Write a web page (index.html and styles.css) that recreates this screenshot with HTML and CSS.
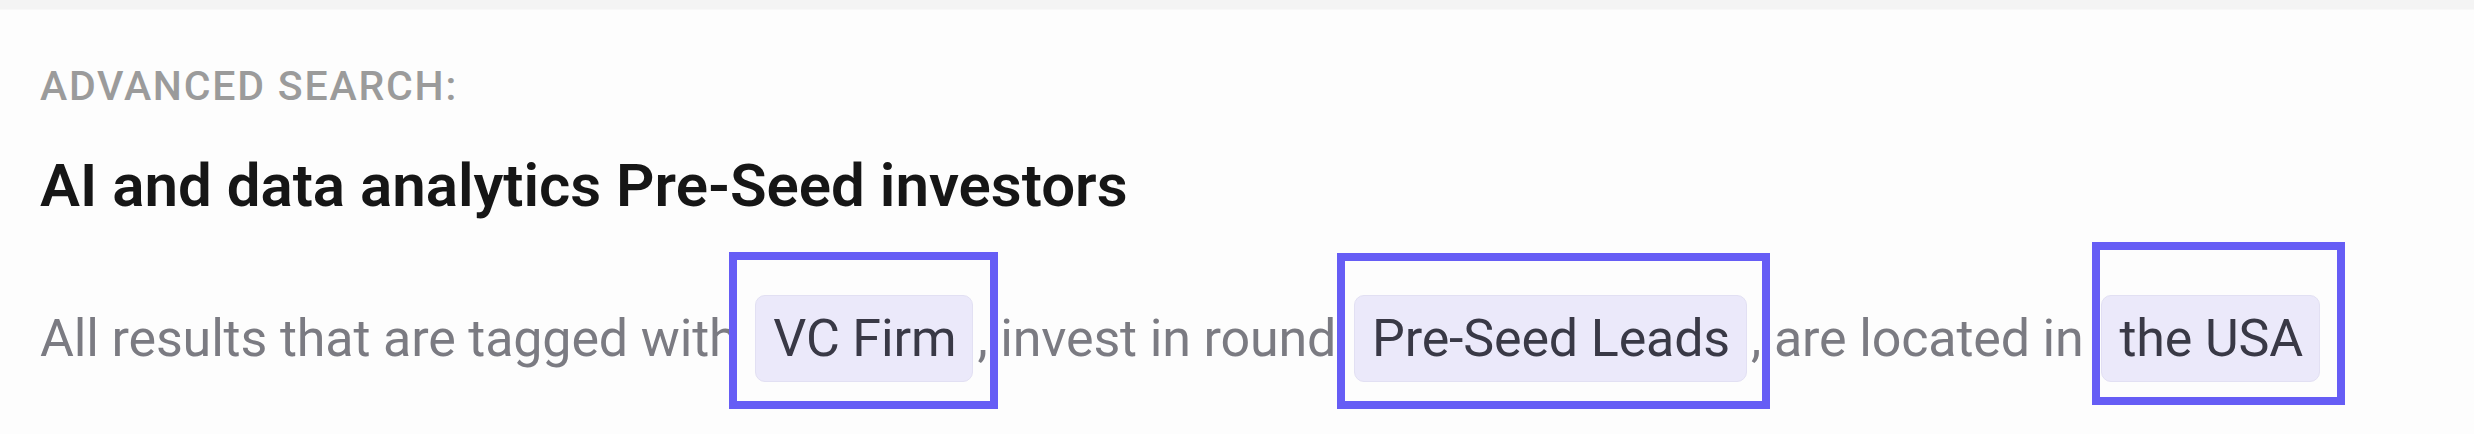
FILE: index.html
```html
<!DOCTYPE html>
<html lang="en">
<head>
  <meta charset="UTF-8" />
  <meta name="viewport" content="width=device-width, initial-scale=1.0"/>
  <title>Advanced Search</title>
  <link rel="stylesheet" href="styles.css">
</head>
<body>
  <div class="topbar"></div>
  <div class="search-summary">
    <p class="eyebrow">ADVANCED SEARCH:</p>
    <h1 class="query-title">AI and data analytics Pre-Seed investors</h1>
    <p class="criteria">
      All results that are tagged with <span class="tag tag-firm">VC Firm</span>, invest in round <span class="tag tag-round">Pre-Seed Leads</span>, are located in <span class="tag tag-place">the USA</span>
    </p>
  </div>
</body>
</html>
```

FILE: styles.css
```css
* { box-sizing: border-box; }
html, body { min-height: 100%; }
body {
  margin: 0;
  font-family: Roboto, 'Noto Sans', sans-serif;
  background: #fdfdfd;
  color: #161616;
}
.topbar {
  height: 10px;
  background: #f4f4f4;
  border-bottom: 1px solid #f8f8f8;
}
.search-summary {
  padding: 52px 40px 40px;
}
.eyebrow {
  margin: 0;
  font-size: 41px;
  line-height: 48px;
  font-weight: 500;
  letter-spacing: 1.8px;
  color: #9b9b9b;
}
.query-title {
  margin: 41px 0 0;
  font-size: 60px;
  line-height: 70px;
  font-weight: 600;
  color: #161616;
}
.criteria {
  margin: 74px 0 0;
  font-size: 52px;
  line-height: 87px;
  letter-spacing: -0.15px;
  color: #7b7b82;
  white-space: nowrap;
}
.tag {
  position: relative;
  display: inline-block;
  vertical-align: top;
  height: 87px;
  line-height: 85px;
  padding: 0 16px 0 17px;
  margin: 0 4px 0 5px;
  background: #ebe9fa;
  border: 1px solid #e2e0f3;
  border-radius: 10px;
  color: #393946;
}
/* annotation frames drawn over the chips */
.tag::after {
  content: "";
  position: absolute;
  border: 8px solid #665df5;
  pointer-events: none;
}
.tag-firm::after { top: -44px; bottom: -28px; left: -27px; right: -26px; }
.tag-round::after { top: -43px; bottom: -28px; left: -18px; right: -24px; }
.tag-place::after { top: -54px; bottom: -24px; left: -10px; right: -26px; }
```
